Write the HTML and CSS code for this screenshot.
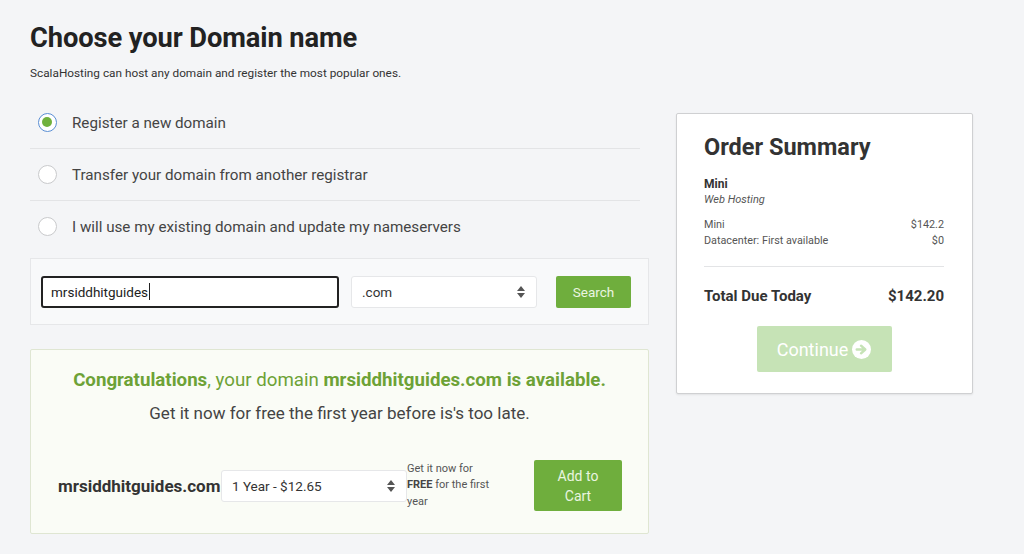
FILE: index.html
```html
<!DOCTYPE html>
<html>
<head>
<meta charset="utf-8">
<link rel="stylesheet" href="styles.css">
</head>
<body>
<div class="page">
  <div class="main">
    <h1 class="title">Choose your Domain name</h1>
    <p class="subtitle">ScalaHosting can host any domain and register the most popular ones.</p>

    <div class="options">
      <div class="option">
        <span class="radio checked"></span>
        <span class="opt-label">Register a new domain</span>
      </div>
      <div class="option">
        <span class="radio"></span>
        <span class="opt-label">Transfer your domain from another registrar</span>
      </div>
      <div class="option last">
        <span class="radio"></span>
        <span class="opt-label">I will use my existing domain and update my nameservers</span>
      </div>
    </div>

    <div class="search-box">
      <div class="input focused">mrsiddhitguides<span class="caret"></span></div>
      <div class="select tld">.com<span class="arrows"><svg width="8" height="12" viewBox="0 0 8 12"><path d="M4 0 L8 5 H0 Z M0 7 H8 L4 12 Z" fill="#555"/></svg></span></div>
      <div class="btn search-btn">Search</div>
    </div>

    <div class="result">
      <p class="congrats"><b>Congratulations</b>, your domain <b>mrsiddhitguides.com is available.</b></p>
      <p class="free-line">Get it now for free the first year before is's too late.</p>
      <div class="buy-row">
        <span class="domain">mrsiddhitguides.com</span>
        <div class="select period">1 Year - $12.65<span class="arrows"><svg width="8" height="12" viewBox="0 0 8 12"><path d="M4 0 L8 5 H0 Z M0 7 H8 L4 12 Z" fill="#555"/></svg></span></div>
        <p class="note">Get it now for <b>FREE</b> for the first year</p>
        <div class="btn cart-btn">Add to<br>Cart</div>
      </div>
    </div>
  </div>

  <aside class="summary">
    <h2 class="sum-title">Order Summary</h2>
    <div class="prod">Mini</div>
    <div class="prod-type">Web Hosting</div>
    <div class="lines">
      <div class="line"><span>Mini</span><span>$142.2</span></div>
      <div class="line"><span>Datacenter: First available</span><span>$0</span></div>
    </div>
    <div class="total"><span>Total Due Today</span><span>$142.20</span></div>
    <div class="continue">Continue <svg width="19" height="19" viewBox="0 0 20 20"><circle cx="10" cy="10" r="10" fill="#fff"/><path d="M5 10 H13 M9.5 6 L14 10 L9.5 14" stroke="#c6e3b6" stroke-width="2.6" fill="none" stroke-linecap="round" stroke-linejoin="round"/></svg></div>
  </aside>
</div>
</body>
</html>
```

FILE: styles.css
```css
* { box-sizing: border-box; }
html, body { margin: 0; padding: 0; }
body {
  background: #f4f5f7;
  font-family: Roboto, "Liberation Sans", Arial, sans-serif;
  color: #333;
  width: 1024px;
  height: 554px;
  overflow: hidden;
}
.page {
  display: flex;
  align-items: flex-start;
  padding-left: 30px;
}
.main {
  width: 619px;
}
.title {
  margin: 22px 0 0;
  font-size: 27.3px;
  line-height: 32px;
  font-weight: 700;
  color: #222;
  letter-spacing: -0.1px;
}
.subtitle {
  margin: 10px 0 0;
  font-size: 11.8px;
  line-height: 18px;
  color: #333;
}
.options {
  margin-top: 15px;
  width: 610px;
}
.option {
  display: flex;
  align-items: center;
  height: 52px;
  border-bottom: 1px solid #e3e4e6;
  padding-left: 8px;
}
.option.last { border-bottom: none; height: 51px; }
.radio {
  width: 19px;
  height: 19px;
  border-radius: 50%;
  border: 1px solid #c9cacc;
  background: #fff;
  margin-right: 15px;
  flex: none;
  position: relative;
}
.radio.checked {
  border: 1.5px solid #5b8fd4;
}
.radio.checked::after {
  content: "";
  position: absolute;
  left: 3px; top: 3px;
  width: 10px; height: 10px;
  border-radius: 50%;
  background: #70b13c;
}
.opt-label {
  font-size: 15.2px;
  color: #444;
}
.search-box {
  margin-top: 6px;
  height: 67px;
  border: 1px solid #e6e7e9;
  background: #f8f9fa;
  display: flex;
  align-items: center;
  padding: 0 17px 0 10px;
}
.input {
  width: 298px;
  height: 32px;
  border: 2px solid #222;
  border-radius: 3px;
  background: #fff;
  font-size: 13.5px;
  color: #222;
  display: flex;
  align-items: center;
  padding-left: 8px;
}
.caret {
  display: inline-block;
  width: 1px;
  height: 17px;
  background: #222;
  margin-left: 1px;
}
.select {
  height: 32px;
  border: 1px solid #e6e7e9;
  border-radius: 3px;
  background: #fff;
  display: flex;
  align-items: center;
  justify-content: space-between;
  padding: 0 11px 0 10px;
  font-size: 13.5px;
  color: #333;
}
.arrows { display: flex; align-items: center; }
.tld {
  width: 186px;
  margin-left: 12px;
}
.btn {
  background: #6fae3d;
  color: #eaf5e0;
  border-radius: 2px;
  display: flex;
  align-items: center;
  justify-content: center;
  text-align: center;
}
.search-btn {
  width: 75px;
  height: 32px;
  margin-left: auto;
  font-size: 13.5px;
}
.result {
  margin-top: 24px;
  height: 185px;
  border: 1px solid #dfe6d2;
  background: #fafcf6;
  border-radius: 2px;
  padding-top: 19px;
}
.congrats {
  margin: 0;
  text-align: center;
  font-size: 18.7px;
  line-height: 22px;
  color: #6da236;
}
.congrats b { font-weight: 700; }
.free-line {
  margin: 11px 0 0;
  text-align: center;
  font-size: 17px;
  line-height: 22px;
  color: #444;
}
.buy-row {
  margin-top: 36px;
  display: flex;
  align-items: center;
  padding-left: 27px;
}
.domain {
  font-size: 17px;
  font-weight: 700;
  color: #333;
  width: 163px;
}
.period {
  width: 186px;
  padding-left: 10px;
}
.note {
  margin: 0;
  width: 96px;
  padding-right: 10px;
  font-size: 11px;
  line-height: 16.5px;
  color: #555;
}
.note b { font-weight: 700; color: #444; }
.cart-btn {
  margin-left: 31px;
  width: 88px;
  height: 51px;
  font-size: 14px;
  line-height: 20px;
  color: #eaf5e0;
}
.summary {
  margin-left: 27px;
  margin-top: 113px;
  width: 297px;
  height: 281px;
  background: #fff;
  border: 1px solid #cfd0d2;
  border-radius: 2px;
  box-shadow: 0 1px 2px rgba(0,0,0,0.08);
  padding: 19px 28px 0 27px;
}
.sum-title {
  margin: 0;
  font-size: 23.5px;
  line-height: 28px;
  font-weight: 700;
  color: #333;
}
.prod {
  margin-top: 16px;
  font-size: 12px;
  font-weight: 700;
  line-height: 15px;
  color: #333;
}
.prod-type {
  font-size: 11px;
  font-style: italic;
  line-height: 16px;
  color: #555;
}
.lines {
  margin-top: 9px;
  padding-bottom: 17px;
  border-bottom: 1px solid #e3e4e6;
}
.line {
  display: flex;
  justify-content: space-between;
  font-size: 10.8px;
  line-height: 16px;
  color: #555;
}
.total {
  margin-top: 18px;
  display: flex;
  justify-content: space-between;
  font-size: 15px;
  font-weight: 700;
  color: #333;
  line-height: 22px;
}
.continue {
  margin: 19px auto 0;
  width: 135px;
  height: 46px;
  background: #c6e3b6;
  border-radius: 2px;
  color: #fff;
  font-size: 18px;
  display: flex;
  align-items: center;
  justify-content: center;
  gap: 4px;
}
```
